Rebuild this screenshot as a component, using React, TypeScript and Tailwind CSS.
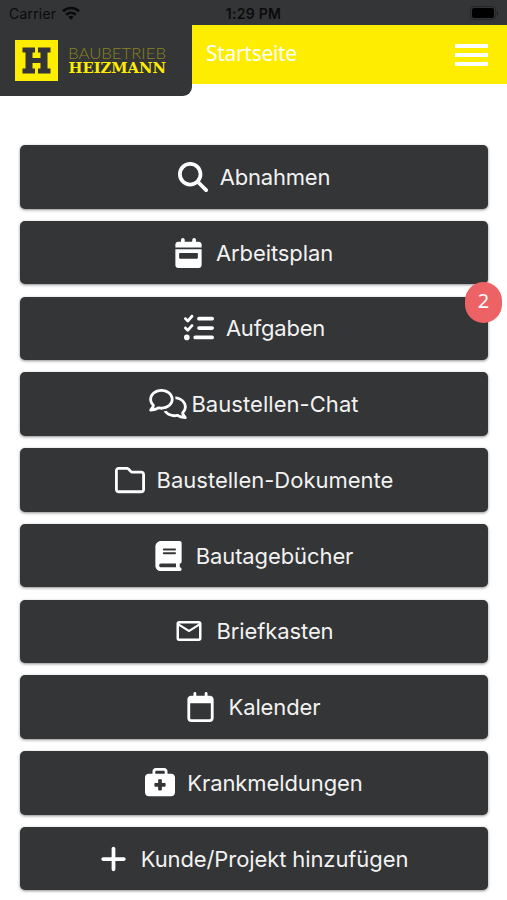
import type { ReactNode } from 'react';
import {
  FaBook,
  FaBriefcaseMedical,
  FaCalendarWeek,
  FaListCheck,
  FaMagnifyingGlass,
  FaPlus,
  FaRegCalendar,
  FaRegComments,
  FaRegFolder,
} from 'react-icons/fa6';
import { MdOutlineMail } from 'react-icons/md';

type Entry = { label: string; icon: ReactNode; gap: string; tracking?: string; badge?: string };

const entries: Entry[] = [
  { label: 'Abnahmen', icon: <FaMagnifyingGlass className="size-[30px]" />, gap: 'gap-3', tracking: 'tracking-[-0.2px]' },
  { label: 'Arbeitsplan', icon: <FaCalendarWeek className="h-[30px] w-[27px]" />, gap: 'gap-[14px]' },
  { label: 'Aufgaben', icon: <FaListCheck className="mr-px ml-px size-[30px]" />, gap: 'gap-[11px]', tracking: 'tracking-[-0.2px]', badge: '2' },
  { label: 'Baustellen-Chat', icon: <FaRegComments className="h-[30px] w-[38px]" />, gap: 'gap-1', tracking: 'tracking-[0.05px]' },
  { label: 'Baustellen-Dokumente', icon: <FaRegFolder className="size-[30px]" />, gap: 'gap-3', tracking: 'tracking-[0px]' },
  { label: 'Bautagebücher', icon: <FaBook className="h-[30px] w-[27px]" />, gap: 'gap-[14px]' },
  { label: 'Briefkasten', icon: <MdOutlineMail className="size-[30px]" />, gap: 'gap-3' },
  { label: 'Kalender', icon: <FaRegCalendar className="h-[30px] w-[27px]" />, gap: 'gap-[14px]' },
  { label: 'Krankmeldungen', icon: <FaBriefcaseMedical className="size-[30px]" />, gap: 'gap-3' },
  { label: 'Kunde/Projekt hinzufügen', icon: <FaPlus className="h-[30px] w-[27px]" />, gap: 'gap-[14px]' },
];

function Logo() {
  return (
    <svg viewBox="0 0 152 42" className="h-[42px] w-[152px] overflow-visible">
      <rect width="43" height="41" fill="#ffed00" />
      <path
        d="M7.500 7.500h12.500v5h-2.500v5.500h8v-5.500h-2.500V7.500h12.500v5h-3v16h3v5H23v-5h2.500v-5.500h-8v5.500h2.500v5H7.500v-5h3v-16h-3z"
        fill="#333536"
      />
      <text x="53" y="19" textLength="98" lengthAdjust="spacingAndGlyphs" fontFamily="Lato, sans-serif" fontWeight="300" fontSize="16" fill="#89831f">
        BAUBETRIEB
      </text>
      <text x="53.500" y="33.300" textLength="97.500" lengthAdjust="spacingAndGlyphs" fontFamily="DejaVu Serif, serif" fontWeight="700" fontSize="15.500" fill="#ffed00">
        HEIZMANN
      </text>
    </svg>
  );
}

function WifiIcon() {
  return (
    <svg viewBox="0 0 18 14" className="-mt-[2px] h-[14px] w-[18px]" fill="none" stroke="currentColor" strokeWidth="2.6">
      <path d="M1 5.200a11.500 11.500 0 0 1 16 0" />
      <path d="M4.200 8.700a7 7 0 0 1 9.600 0" />
      <path d="M9 13.700l-2.700-2.800a4 4 0 0 1 5.400 0z" fill="currentColor" stroke="none" />
    </svg>
  );
}

function Header() {
  return (
    <header className="relative h-24 w-full">
      <div className="h-[25px] bg-[#333536]" />
      <div className="flex h-[59px] items-center justify-between bg-[#ffed00] pr-[19px] pl-[206px]">
        <h1 className="-mt-[3px] font-['Noto_Sans',sans-serif] text-[21px] leading-none tracking-[-0.3px] text-white">Startseite</h1>
        <button aria-label="Menü" className="flex flex-col gap-[5px]">
          <span className="h-1 w-[33px] bg-white" />
          <span className="h-1 w-[33px] bg-white" />
          <span className="h-1 w-[33px] bg-white" />
        </button>
      </div>
      <div className="absolute top-0 left-0 h-24 w-48 rounded-br-[9px] bg-[#333536] pt-[40px] pl-[15px]">
        <Logo />
      </div>
      <div className="absolute inset-x-0 top-0 grid h-[27px] grid-cols-3 items-center px-[9px] text-[14px] text-[#0b0b0c]">
        <div className="flex items-center gap-[6px]">
          <span className="tracking-[0.2px]">Carrier</span>
          <WifiIcon />
        </div>
        <span className="text-center font-semibold tracking-[0.3px]">1:29 PM</span>
        <span className="-mt-px flex items-center justify-end gap-px">
          <span className="rounded-[4px] border border-[#252627] p-px">
            <span className="block h-[10px] w-[22px] rounded-[2px] bg-black" />
          </span>
          <span className="h-1 w-px rounded bg-[#1a1b1c]" />
        </span>
      </div>
    </header>
  );
}

export default function App() {
  return (
    <div className="h-[900px] w-full overflow-hidden bg-white font-['Inter',sans-serif]">
      <Header />
      <main className="flex flex-col gap-[12.25px] pt-[49px] pr-[19px] pl-5">
        {entries.map(({ label, icon, gap, tracking = 'tracking-[-0.1px]', badge }) => (
          <button
            key={label}
            className={`relative flex h-[63.5px] w-full items-center justify-center rounded-[5px] bg-[#333536] text-[22px] text-white shadow-[0_1px_3px_rgba(0,0,0,0.45)] ${gap}`}
          >
            {icon}
            <span className={`leading-none font-normal text-[#f2f2f2] ${tracking}`}>{label}</span>
            {badge && (
              <span className="absolute -top-[15px] -right-[14px] flex h-[41px] w-[37px] items-center justify-center rounded-full bg-[#ed6265] pb-[3px] font-['Noto_Sans',sans-serif] text-[20px] text-white">
                {badge}
              </span>
            )}
          </button>
        ))}
      </main>
    </div>
  );
}
